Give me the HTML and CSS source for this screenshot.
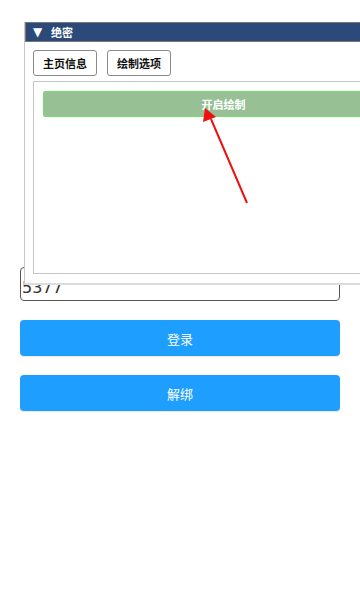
FILE: index.html
```html
<!DOCTYPE html>
<html lang="zh">
<head>
<meta charset="utf-8">
<link rel="stylesheet" href="styles.css">
</head>
<body>
<div class="page">
  <div class="input">5377</div>
  <button class="btn">登录</button>
  <button class="btn">解绑</button>
</div>
<div class="window">
  <div class="titlebar"><span class="tri">▼</span><span class="title">绝密</span></div>
  <div class="winbody">
    <div class="tabs">
      <button class="tab">主页信息</button>
      <button class="tab">绘制选项</button>
    </div>
    <div class="panel">
      <button class="draw">开启绘制</button>
    </div>
  </div>
</div>
<svg class="arrow" width="360" height="600" viewBox="0 0 360 600">
  <line x1="247" y1="203" x2="211" y2="119" stroke="#ee1111" stroke-width="2"/>
  <polygon points="205,108 203,122 216,117" fill="#ee1111"/>
</svg>
</body>
</html>
```
FILE: styles.css
```css
html, body {
  margin: 0;
  padding: 0;
}
body {
  width: 360px;
  height: 600px;
  overflow: hidden;
  position: relative;
  background: #ffffff;
  font-family: "Noto Sans CJK SC", "Noto Sans", sans-serif;
}
.page {
  padding: 267px 20px 0 20px;
  display: flex;
  flex-direction: column;
}
.input {
  border: 1px solid #555;
  border-radius: 4px;
  box-sizing: border-box;
  height: 34px;
  font-family: "DejaVu Sans", sans-serif;
  font-size: 16px;
  line-height: 16px;
  padding: 12px 0 0 1px;
  color: #333;
  margin-bottom: 19px;
}
.btn {
  height: 36px;
  border: none;
  border-radius: 4px;
  background: #1e9fff;
  color: #fff;
  font-family: "Noto Sans CJK SC", sans-serif;
  font-size: 13px;
  margin: 0 0 19px 0;
  padding: 0;
  box-shadow: 0 1px 1px rgba(0,0,0,0.08);
}
.window {
  position: absolute;
  left: 24px;
  top: 22px;
  width: 400px;
  background: #fff;
  border-left: 1px solid #c8c8c8;
  border-bottom: 2px solid #dcdcdc;
}
.titlebar {
  height: 18px;
  background: #2b4a7a;
  border: 1px solid #777;
  border-right: none;
  display: flex;
  align-items: center;
  color: #fff;
  font-size: 11px;
  font-weight: bold;
}
.tri {
  font-family: "DejaVu Sans", sans-serif;
  font-size: 12px;
  margin-left: 7px;
  width: 16px;
}
.title {
  margin-left: 2px;
}
.winbody {
  padding: 8px 0 9px 8px;
}
.tabs {
  display: flex;
  gap: 10px;
}
.tab {
  width: 64px;
  height: 26px;
  background: #fff;
  border: 1px solid #8a8a8a;
  border-radius: 3px;
  font-family: "Noto Sans CJK SC", sans-serif;
  font-weight: bold;
  font-size: 11px;
  color: #111;
  padding: 0;
}
.panel {
  margin-top: 5px;
  height: 193px;
  border: 1px solid #c4c4c4;
  border-right: none;
  padding: 8px 0 0 9px;
  box-sizing: border-box;
}
.draw {
  width: 361px;
  height: 26px;
  background: #98c095;
  border: 1px solid #6fe06b;
  border-radius: 2px;
  color: #fff;
  font-family: "Noto Sans CJK SC", sans-serif;
  font-weight: bold;
  font-size: 11px;
  padding: 0;
}
.arrow {
  position: absolute;
  left: 0;
  top: 0;
}
```
